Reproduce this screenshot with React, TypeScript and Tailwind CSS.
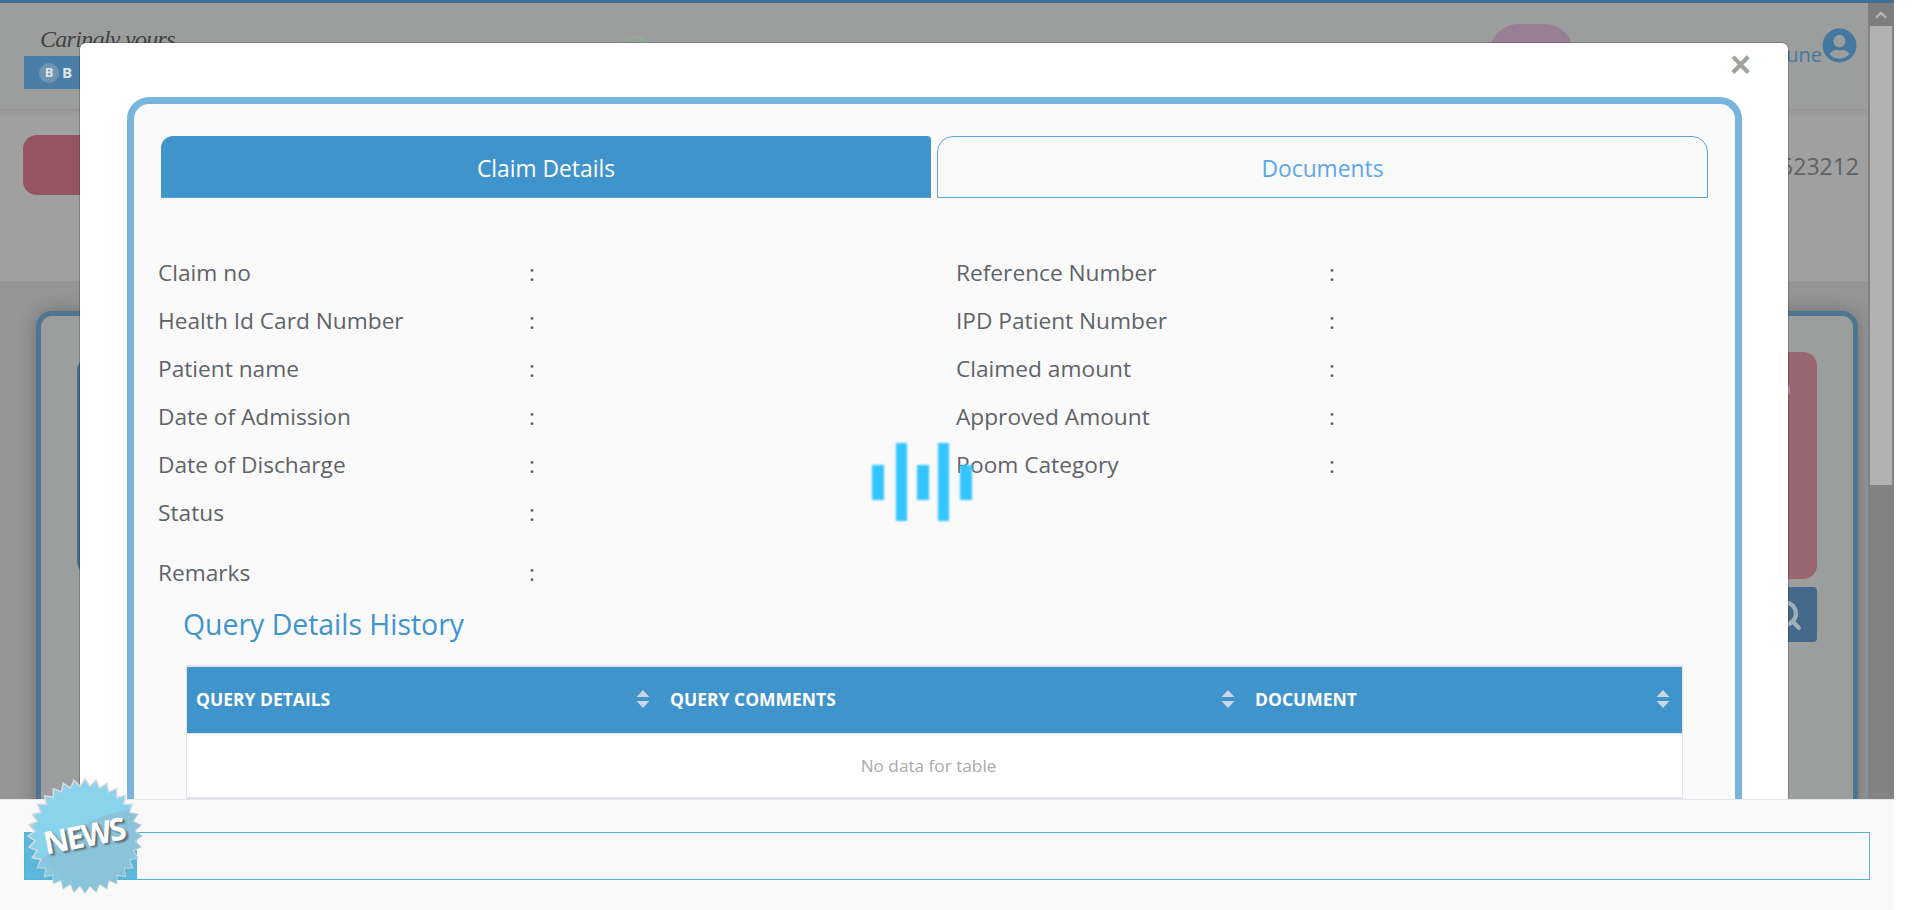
import { FaUserCircle } from "react-icons/fa";
import { ChevronUp, Search } from "lucide-react";

const leftRows = [
  "Claim no",
  "Health Id Card Number",
  "Patient name",
  "Date of Admission",
  "Date of Discharge",
  "Status",
];
const rightRows = [
  "Reference Number",
  "IPD Patient Number",
  "Claimed amount",
  "Approved Amount",
  "Room Category",
];

const burstPoints = Array.from({ length: 64 })
  .map((_, i) => {
    const r = i % 2 === 0 ? 57 : 50;
    const a = (i * Math.PI) / 32;
    return `${(60 + r * Math.cos(a)).toFixed(1)},${(60 + r * Math.sin(a)).toFixed(1)}`;
  })
  .join(" ");

function SortIcon() {
  return (
    <svg width="14" height="18" viewBox="0 0 14 18" className="shrink-0">
      <path d="M7 0l6.5 7H.5z" fill="#c9d6e4" />
      <path d="M7 18l6.5-7H.5z" fill="#c9d6e4" />
    </svg>
  );
}

function Field({ label, width }: { label: string; width: string }) {
  return (
    <div className="flex h-[48px] items-center text-[22.7px] text-[#5f6368]">
      <span className={width}>{label}</span>
      <span>:</span>
    </div>
  );
}

function BackgroundPage() {
  return (
    <div className="flex h-full w-[1894px] flex-col border-t-[3px] border-[#40708f]">
      <div className="flex min-h-0 flex-1">
        <div className="flex min-w-0 flex-1 flex-col bg-[#959595]">
          <header className="flex h-[106px] items-start bg-[#9c9e9d] pr-[11px] pl-[24px]">
            <div className="mt-[19px] w-[226px]">
              <div className="h-[34px] pl-[16px] font-['Liberation_Serif',serif] text-[24px] leading-[34px] tracking-[-0.7px] text-[#414242] italic">
                Caringly yours
              </div>
              <div className="flex h-[33px] w-[56px] items-center gap-[3px] bg-[#4a7ea6] pl-[15px]">
                <span className="flex h-[20px] w-[20px] items-center justify-center rounded-full bg-[#6f95b3] text-[13px] font-bold text-[#dfe6ea]">
                  B
                </span>
                <span className="text-[15px] font-bold text-[#dfe6ea]">B</span>
              </div>
            </div>
            <div className="mt-[33px] ml-[370px] h-[30px] w-[30px] rounded-full border-2 border-[#8fb08f]" />
            <div className="mt-[21px] ml-[839px] h-[60px] w-[85px] rounded-[30px] bg-[#997f95]" />
            <span className="mt-[38px] ml-auto text-[20px] leading-[28px] text-[#44789f]">une</span>
            <FaUserCircle className="mt-[25px] text-[35px] text-[#44789f]" />
          </header>
          <div className="flex h-[172px] items-start justify-between bg-[#a0a0a0] pt-[26px] pr-[9px] pl-[23px] shadow-[inset_0_8px_10px_-8px_rgba(0,0,0,0.15)]">
            <div className="h-[60px] w-[200px] rounded-[14px] bg-[#945560]" />
            <span className="mt-[14px] text-[23px] text-[#5f6264]">523212</span>
          </div>
          <div className="flex min-h-0 flex-1 pt-[30px] pr-[10px] pl-[36px]">
            <div className="flex h-[600px] w-full justify-between rounded-t-[16px] border-[5px] border-[#4f7690] bg-[#9c9e9d] pt-[36px] pr-[36px] pl-[36px] shadow-[0_0_18px_rgba(0,0,0,0.25)]">
              <div className="mt-[5px] h-[218px] w-[200px] rounded-[14px] bg-[#44708e]" />
              <div className="flex w-[200px] flex-col gap-[8px]">
                <div className="flex h-[227px] justify-end rounded-[14px] bg-[#99656e] pt-[28px] pr-[27px]">
                  <div className="h-[20px] w-[20px] rounded-full bg-[#b0a0a5]" />
                </div>
                <div className="flex h-[55px] items-center justify-end rounded-[4px] bg-[#44698a] pr-[14px]">
                  <Search className="h-[34px] w-[34px] text-[#9fb0b9]" strokeWidth={3} />
                </div>
              </div>
            </div>
          </div>
        </div>
        <div className="flex w-[26px] flex-col bg-[#828282] px-[2px]">
          <div className="-mx-[2px] flex h-[23px] items-center justify-center bg-[#7d7d7d]">
            <ChevronUp className="h-[18px] w-[18px] text-[#b5b5b5]" strokeWidth={3} />
          </div>
          <div className="h-[459px] bg-[#b2b2b2]" />
        </div>
      </div>
    </div>
  );
}

function ClaimModal() {
  return (
    <div className="absolute top-[43px] left-[80px] h-[780px] w-[1708px] rounded-[6px] bg-white px-[47px] pt-[54px] shadow-[0_0_0_1px_rgba(0,0,0,0.2)]">
      <button className="absolute top-[4px] right-[37px] font-['Liberation_Sans',sans-serif] text-[36px] leading-[36px] font-bold text-[#a0a0a0]">
        ×
      </button>
      <div className="h-full w-[1615px] rounded-t-[22px] border-x-[7px] border-t-[7px] border-[#79b4dc] bg-[#fafafa] pt-[32px]">
        <div className="flex gap-[6px] pr-[27px] pl-[27px]">
          <div className="flex h-[62px] w-[770px] items-center justify-center rounded-tl-[12px] rounded-tr-[4px] border-b border-[#5ba0d6] bg-[#3f94cc] pt-[5px] text-[22.8px] text-white">
            Claim Details
          </div>
          <div className="flex h-[62px] w-[771px] items-center justify-center rounded-t-[16px] border border-[#5ba3d9] pt-[5px] text-[22.8px] text-[#5ba7ec]">
            Documents
          </div>
        </div>
        <div className="mt-[51px] flex pl-[24px]">
          <div className="w-[798px]">
            {leftRows.map((label) => (
              <Field key={label} label={label} width="w-[371px]" />
            ))}
          </div>
          <div>
            {rightRows.map((label) => (
              <Field key={label} label={label} width="w-[373px]" />
            ))}
          </div>
        </div>
        <div className="mt-[12px] pl-[24px]">
          <Field label="Remarks" width="w-[371px]" />
        </div>
        <h2 className="mt-[7px] pl-[49px] text-[28.4px] leading-[40px] text-[#3f94cc]">Query Details History</h2>
        <div className="mt-[21px] ml-[52px] w-[1497px] border-x border-t-2 border-b-2 border-[#e3e3ea] bg-white">
          <div className="grid h-[66px] grid-cols-[473px_585px_1fr] items-center bg-[#3f94cc] pb-[2px] text-[17.5px] font-bold text-white">
            <div className="flex items-center justify-between pr-[10px] pl-[9px]">
              <span>QUERY DETAILS</span>
              <SortIcon />
            </div>
            <div className="flex items-center justify-between pr-[10px] pl-[10px]">
              <span>QUERY COMMENTS</span>
              <SortIcon />
            </div>
            <div className="flex items-center justify-between pr-[12px] pl-[10px]">
              <span>DOCUMENT</span>
              <SortIcon />
            </div>
          </div>
          <div className="flex h-[64px] items-center justify-center border-t border-[#e3e3ea] pr-[12px] text-[17.2px] text-[#aaaaaa]">
            No data for table
          </div>
        </div>
      </div>
    </div>
  );
}

function Spinner() {
  return (
    <div className="absolute top-[443px] left-[872px] flex h-[78px] items-center blur-[1px]">
      <div className="h-[35px] w-[12px] bg-[#33c5ff]" />
      <div className="ml-[12px] h-[78px] w-[11px] bg-[#33c5ff]" />
      <div className="ml-[10px] h-[35px] w-[12px] bg-[#33c5ff]" />
      <div className="ml-[9px] h-[78px] w-[11px] bg-[#33c5ff]" />
      <div className="ml-[11px] h-[35px] w-[12px] bg-[#33c5ff]" />
    </div>
  );
}

function NewsBar() {
  return (
    <div className="absolute bottom-0 left-0 h-[111px] w-[1894px] border-t border-[#e5e5ee] bg-[#f9f9f9] pt-[32px] pr-[24px] pl-[24px]">
      <div className="h-[48px] border border-[#4fb6da]">
        <div className="h-full w-[112px] bg-[#5cb8da]" />
      </div>
    </div>
  );
}

function NewsBadge() {
  return (
    <div className="absolute top-[776px] left-[25px] h-[120px] w-[120px]">
      <svg width="120" height="120" viewBox="0 0 120 120">
        <defs>
          <clipPath id="burst">
            <polygon points={burstPoints} />
          </clipPath>
          <linearGradient id="lower" x1="0" y1="1" x2="1" y2="0.4">
            <stop offset="0" stopColor="#7edcff" />
            <stop offset="0.35" stopColor="#8ac3da" />
            <stop offset="1" stopColor="#8bc4da" />
          </linearGradient>
        </defs>
        <polygon points={burstPoints} fill="#8ad3ec" stroke="#d9d9d9" strokeWidth="1.5" />
        <path d="M0 110 C25 60 70 35 120 32 V120 H0Z" fill="url(#lower)" clipPath="url(#burst)" />
      </svg>
      <span className="absolute top-[39px] left-[18px] -rotate-[11deg] font-['Open_Sans',sans-serif] text-[31px] leading-[40px] font-bold tracking-[-2px] text-white [text-shadow:2px_2px_2px_rgba(70,70,70,0.7)]">
        NEWS
      </span>
    </div>
  );
}

export default function App() {
  return (
    <div className="relative h-[910px] w-full overflow-hidden bg-white font-['Open_Sans',sans-serif]">
      <BackgroundPage />
      <ClaimModal />
      <NewsBar />
      <Spinner />
      <NewsBadge />
    </div>
  );
}
